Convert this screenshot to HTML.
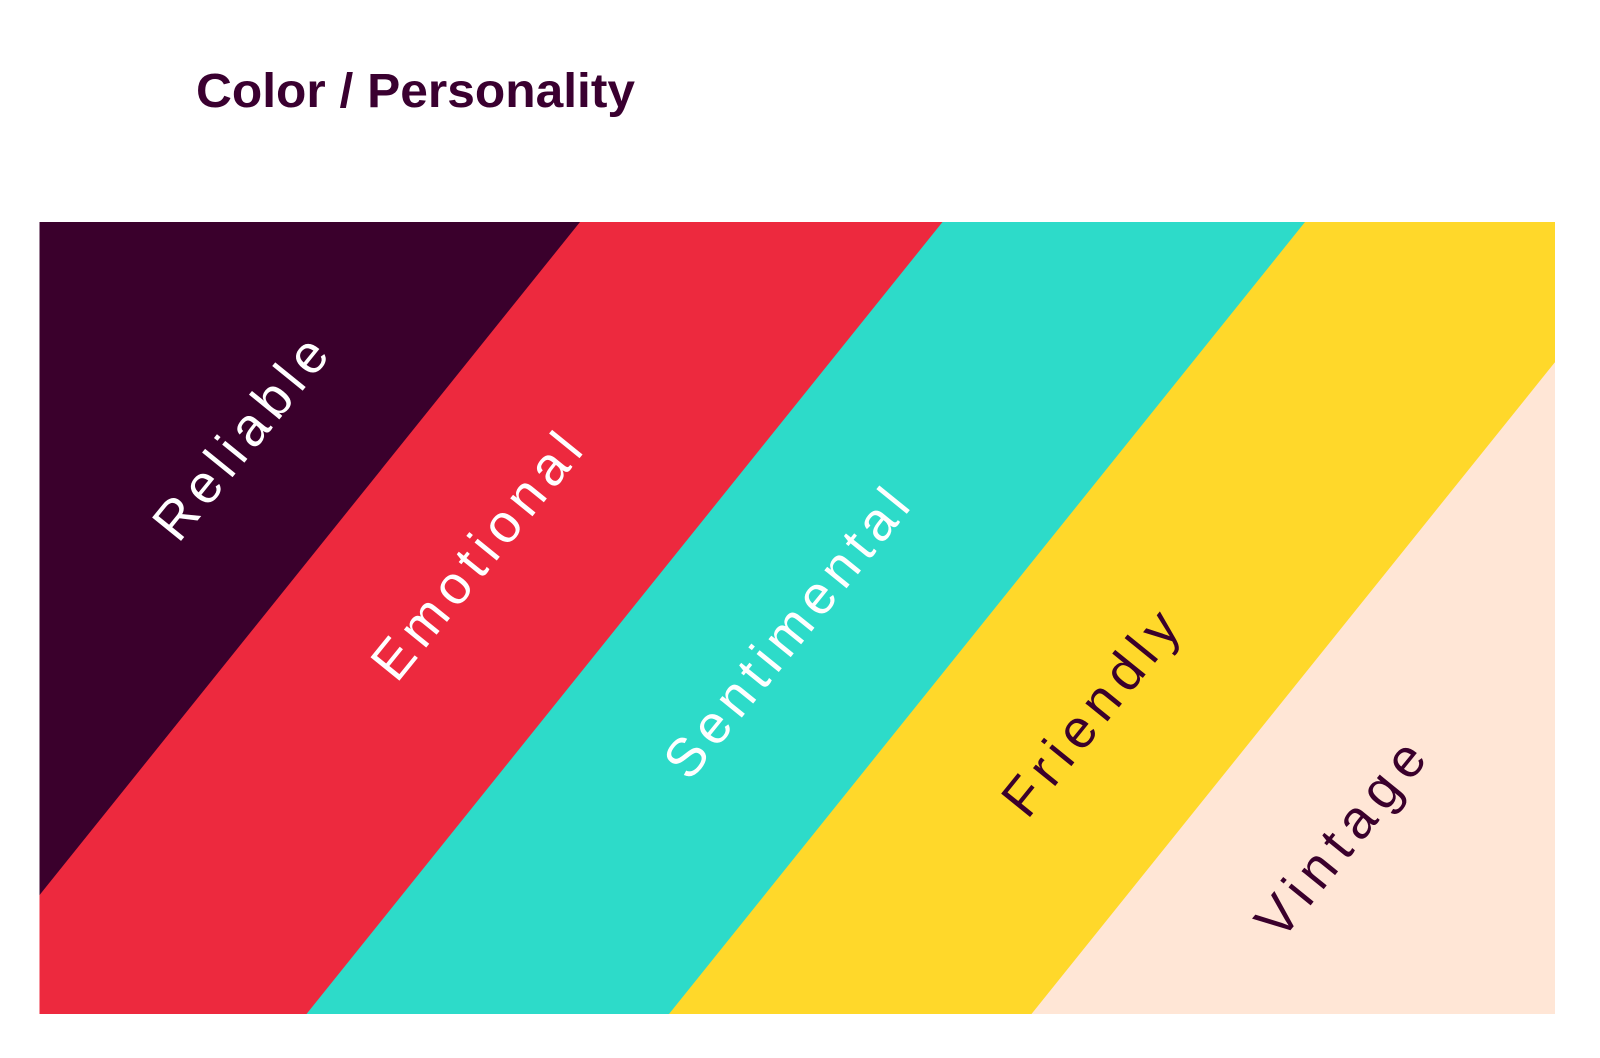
<!DOCTYPE html>
<html><head><meta charset="utf-8"><style>
html,body{margin:0;padding:0;background:#fff;width:1600px;height:1058px;overflow:hidden}
svg{display:block}
</style></head><body>
<svg width="1600" height="1058" viewBox="0 0 1600 1058" xmlns="http://www.w3.org/2000/svg">
<defs><clipPath id="c"><rect x="39.5" y="222" width="1515.5" height="792"/></clipPath></defs>
<text x="196" y="107" font-family="Liberation Sans, sans-serif" font-weight="bold" font-size="48" fill="#3a0030" textLength="439" lengthAdjust="spacingAndGlyphs">Color / Personality</text>
<g clip-path="url(#c)">
<rect x="39.5" y="222" width="1515.5" height="792" fill="#ffe6d6"/>
<polygon points="-400,222 1667.5,222 1031.5,1014 -400,1014" fill="#ffd82a"/>
<polygon points="-400,222 1305,222 669,1014 -400,1014" fill="#2ddbc9"/>
<polygon points="-400,222 942.5,222 306.5,1014 -400,1014" fill="#ed293e"/>
<polygon points="-400,222 580,222 -56,1014 -400,1014" fill="#3a002c"/>
</g>
<g font-family="Liberation Sans, sans-serif" font-size="54" text-anchor="middle" lengthAdjust="spacingAndGlyphs">
<text transform="translate(240,438) rotate(-51)" dy="0.35em" fill="#fff" textLength="243">Reliable</text>
<text transform="translate(476,556) rotate(-51)" dy="0.35em" fill="#fff" textLength="299">Emotional</text>
<text transform="translate(786,633) rotate(-51)" dy="0.35em" fill="#fff" textLength="354">Sentimental</text>
<text transform="translate(1090,713) rotate(-51)" dy="0.35em" fill="#3a002c" textLength="246">Friendly</text>
<text transform="translate(1340,839) rotate(-51)" dy="0.35em" fill="#3a002c" textLength="235">Vintage</text>
</g>
</svg>
</body></html>
